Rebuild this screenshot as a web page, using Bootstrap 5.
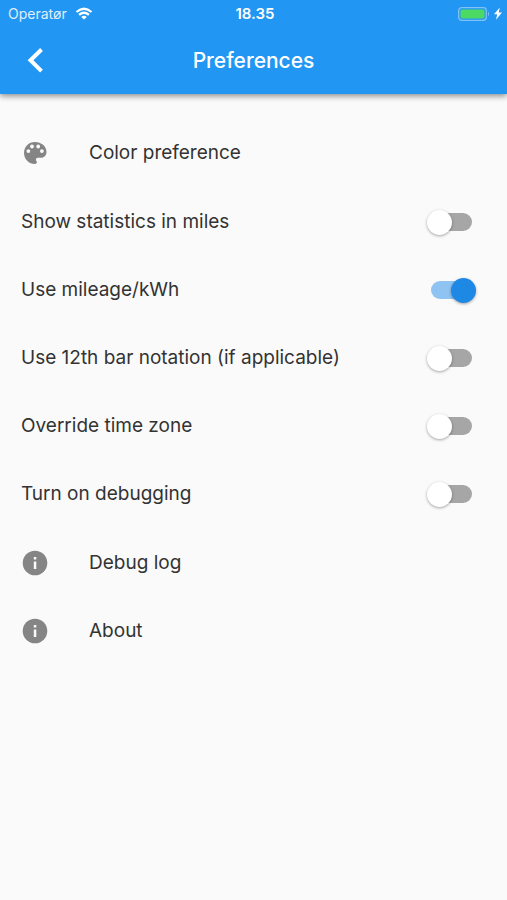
<!DOCTYPE html>
<html lang="en">
<head>
<meta charset="utf-8">
<meta name="viewport" content="width=device-width, initial-scale=1">
<title>Preferences</title>
<link href="https://cdn.jsdelivr.net/npm/bootstrap@5.3.0/dist/css/bootstrap.min.css" rel="stylesheet">
<style>
  body { background: #fafafa; color: #333; font-family: Inter, "Liberation Sans", sans-serif; }
  .app-header { background: #2196f3; color: #fff; box-shadow: 0 2px 6px rgba(0, 0, 0, .45); }
  .status-bar { height: 27px; padding: 0 5px 0 8px; font-size: 14px; line-height: 20px; }
  .status-bar .carrier { opacity: .85; }
  .status-bar .clock { font-size: 15px; }
  .title-bar { height: 67px; padding: 0 21px; }
  .title-bar h1 { font-size: 21px; line-height: 28px; font-weight: 500; }
  .back-btn { width: 28px; height: 28px; }
  .pref-list { padding-top: 25px; }
  .pref-row { height: 68px; padding: 0 35px 0 21px; font-size: 19px; line-height: 24px; color: #333; }
  .pref-group + .pref-group { margin-top: 1px; }
  .pref-icon { width: 28px; margin-right: 40px; fill: #858585; }
  .pref-switch {
    display: flex; align-items: center; flex: none; appearance: none;
    width: 41px; height: 18px; margin: 0; cursor: pointer;
    border-radius: 9px; background: #a6a6a6;
  }
  .pref-switch::before {
    content: ""; flex: none; width: 25px; height: 25px; margin-left: -4px;
    border-radius: 50%; background: #fff; box-shadow: 0 1px 3px rgba(0, 0, 0, .35);
  }
  .pref-switch:checked { background: #8fc3f1; }
  .pref-switch:checked::before { margin-left: 20px; background: #1e88e5; }
</style>
</head>
<body>
<header class="app-header">
  <div class="status-bar row gx-0 align-items-center">
    <div class="col d-flex align-items-center gap-2">
      <span class="carrier">Operatør</span>
      <svg width="18" height="13" viewBox="0 0 17 13" fill="none" stroke="#fff" stroke-width="2.300" aria-label="Wi-Fi">
        <path d="M1 5Q8.500-1.600 16 5M3.600 7.900Q8.500 3.600 13.400 7.900"/>
        <path d="M8.500 12.500L5.700 9.900Q8.500 7.700 11.300 9.900Z" fill="#fff" stroke="none"/>
      </svg>
    </div>
    <div class="clock col-auto fw-semibold">18.35</div>
    <div class="col d-flex align-items-center justify-content-end gap-1">
      <svg width="32" height="14" viewBox="0 0 32 14" aria-label="Battery charging">
        <rect x=".7" y=".7" width="27.600" height="12.600" rx="3" fill="none" stroke="#82c2f8" stroke-width="1.300"/>
        <rect x="2.500" y="2.500" width="24" height="9" rx="1.500" fill="#4cd964"/>
        <path d="M30 4.500Q32 7 30 9.500Z" fill="#82c2f8"/>
      </svg>
      <svg width="8" height="13" viewBox="0 0 8 13" fill="#fff" aria-hidden="true"><path d="M5.800.5L0 7.200H3.200L2 12.700L8 5.500H4.700Z"/></svg>
    </div>
  </div>
  <div class="title-bar row gx-0 align-items-center">
    <div class="col">
      <button class="back-btn btn p-0 border-0 d-flex" type="button" aria-label="Back">
        <svg width="28" height="28" viewBox="0 0 28 28" fill="none" stroke="#fff" stroke-width="4"><path d="M20.500 2.500L9.500 13.300L20.500 24.100"/></svg>
      </button>
    </div>
    <h1 class="col-auto m-0">Preferences</h1>
    <div class="col"></div>
  </div>
</header>

<main class="pref-list">
  <div class="pref-group">
    <a href="#color" class="pref-row d-flex align-items-center text-decoration-none">
      <svg class="pref-icon" height="28" viewBox="0 0 28 28" aria-hidden="true">
        <path fill-rule="evenodd" d="M14 3C7.600 3 3 7.900 3 14s4.900 11 11 11c1.100 0 1.900-.8 1.900-1.900 0-.5-.2-.9-.5-1.200-.3-.3-.5-.8-.5-1.200 0-1.100.8-1.900 1.900-1.900H20c3.400 0 5.500-2.600 5.500-5.800C25.500 7.200 20.300 3 14 3ZM7.400 14a1.900 1.900 0 1 1 0-3.800 1.900 1.900 0 0 1 0 3.800ZM11 9.400a1.900 1.900 0 1 1 0-3.800 1.900 1.900 0 0 1 0 3.800ZM17.200 9.400a1.900 1.900 0 1 1 0-3.800 1.900 1.900 0 0 1 0 3.800ZM20.900 14a1.900 1.900 0 1 1 0-3.800 1.900 1.900 0 0 1 0 3.800Z"/>
      </svg>
      Color preference
    </a>
  </div>
  <div class="pref-group">
    <div class="pref-row d-flex align-items-center justify-content-between">
      <label for="miles">Show statistics in miles</label>
      <input class="pref-switch" type="checkbox" role="switch" id="miles">
    </div>
    <div class="pref-row d-flex align-items-center justify-content-between">
      <label for="mileage">Use mileage/kWh</label>
      <input class="pref-switch" type="checkbox" role="switch" id="mileage" checked>
    </div>
    <div class="pref-row d-flex align-items-center justify-content-between">
      <label for="twelfth">Use 12th bar notation (if applicable)</label>
      <input class="pref-switch" type="checkbox" role="switch" id="twelfth">
    </div>
    <div class="pref-row d-flex align-items-center justify-content-between">
      <label for="zone">Override time zone</label>
      <input class="pref-switch" type="checkbox" role="switch" id="zone">
    </div>
    <div class="pref-row d-flex align-items-center justify-content-between">
      <label for="debugging">Turn on debugging</label>
      <input class="pref-switch" type="checkbox" role="switch" id="debugging">
    </div>
  </div>
  <div class="pref-group">
    <a href="#log" class="pref-row d-flex align-items-center text-decoration-none">
      <svg class="pref-icon" height="28" viewBox="0 0 28 28" aria-hidden="true"><circle cx="14" cy="14" r="12.300"/><path fill="#fafafa" d="M12.800 8h2.500v2.500h-2.500zM12.800 12.500h2.500v7.500h-2.500z"/></svg>
      Debug log
    </a>
    <a href="#about" class="pref-row d-flex align-items-center text-decoration-none">
      <svg class="pref-icon" height="28" viewBox="0 0 28 28" aria-hidden="true"><circle cx="14" cy="14" r="12.300"/><path fill="#fafafa" d="M12.800 8h2.500v2.500h-2.500zM12.800 12.500h2.500v7.500h-2.500z"/></svg>
      About
    </a>
  </div>
</main>
<script src="https://cdn.jsdelivr.net/npm/bootstrap@5.3.0/dist/js/bootstrap.bundle.min.js"></script>
</body>
</html>
